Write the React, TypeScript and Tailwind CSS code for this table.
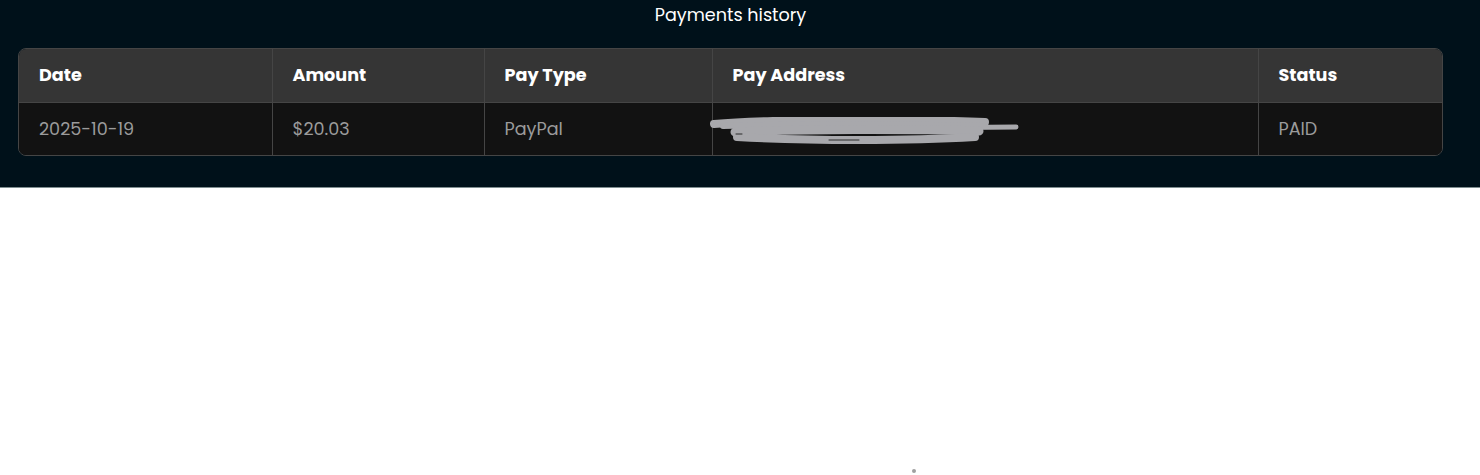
import React from "react";

const rows = [
  { date: "2025-10-19", amount: "$20.03", type: "PayPal", status: "PAID" },
];

function Scribble() {
  return (
    <svg
      className="absolute left-[-4px] top-[14px] pointer-events-none"
      width="312"
      height="30"
      viewBox="0 0 312 30"
      fill="none"
    >
      <g stroke="#a8a8ac" strokeLinecap="round" strokeLinejoin="round">
        <path d="M5 7 C60 2 200 2 276 5" strokeWidth="8" />
        <path d="M200 11 L307 10" strokeWidth="5" />
        <path d="M14 9 C90 7 200 7 272 9" strokeWidth="6" />
        <path d="M26 15 C90 12 200 12 270 14" strokeWidth="9" />
        <path d="M28 20 C100 24 200 24 266 20" strokeWidth="8" />
      </g>
      <g stroke="#2a2a2a" strokeLinecap="round" strokeWidth="1">
        <path d="M27 17 L33 17" />
        <path d="M120 23 L150 23" />
      </g>
    </svg>
  );
}

export default function App() {
  return (
    <div className="min-h-[475px] bg-white font-['Poppins','Open_Sans',sans-serif]">
      <div className="bg-[#00111a] pl-[18px] pr-[37px] pt-[3px] pb-[31px] border-b border-[#7f8e90]">
        <h2 className="text-center text-white text-[17.6px] leading-6">Payments history</h2>
        <div className="mt-[21px] rounded-lg border border-[#454545] overflow-hidden">
          <table className="w-full table-fixed border-collapse text-left text-[17.6px]">
            <colgroup>
              <col className="w-[253px]" />
              <col className="w-[212px]" />
              <col className="w-[228px]" />
              <col className="w-[546px]" />
              <col />
            </colgroup>
            <thead>
              <tr className="bg-[#353535] h-[53px]">
                {["Date", "Amount", "Pay Type", "Pay Address", "Status"].map((h, i) => (
                  <th
                    key={h}
                    className={`px-5 font-bold text-white border-b border-[#454545] ${i > 0 ? "border-l" : ""}`}
                  >
                    {h}
                  </th>
                ))}
              </tr>
            </thead>
            <tbody>
              {rows.map((r) => (
                <tr key={r.date} className="bg-[#121212] h-[53px] text-[#9b9b9b]">
                  <td className="px-5">{r.date}</td>
                  <td className="px-5 border-l border-[#454545]">{r.amount}</td>
                  <td className="px-5 border-l border-[#454545]">{r.type}</td>
                  <td className="px-5 border-l border-[#454545] relative">
                    <Scribble />
                  </td>
                  <td className="px-5 border-l border-[#454545]">{r.status}</td>
                </tr>
              ))}
            </tbody>
          </table>
        </div>
      </div>
      <div className="flex justify-center pt-[281px] pl-[347px]">
        <div className="w-[4px] h-[4px] rounded-full bg-[#a0a0a0]" />
      </div>
    </div>
  );
}
